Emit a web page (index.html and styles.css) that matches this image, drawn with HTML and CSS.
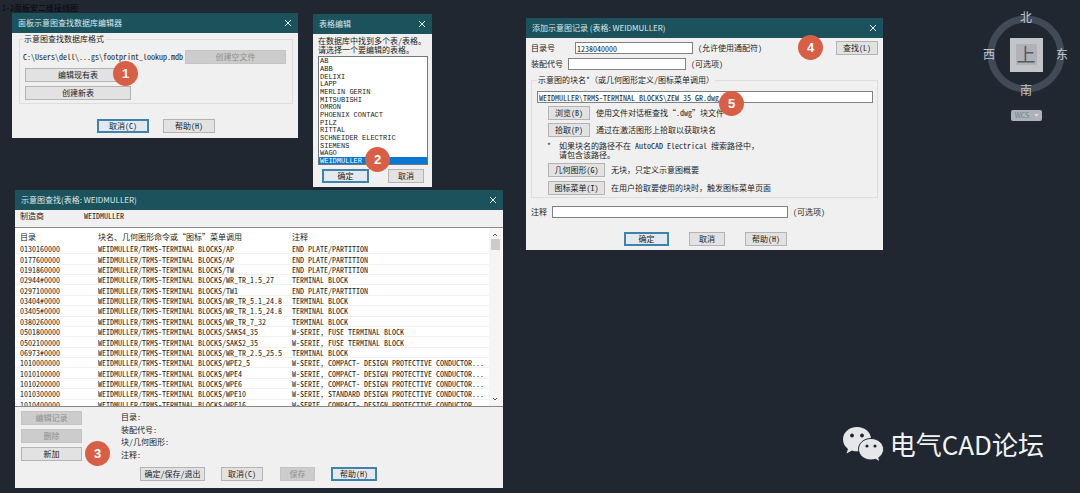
FILE: index.html
```html
<!DOCTYPE html>
<html lang="zh-CN">
<head>
<meta charset="utf-8">
<title>面板示意图查找数据库编辑器</title>
<link rel="stylesheet" href="styles.css">
</head>
<body>
<main class="desktop">
  <p class="drawing-label">1-2面板安二维接线图</p>

  <section class="window editor">
    <header class="titlebar"><h2>面板示意图查找数据库编辑器</h2><button class="close" aria-label="关闭"><svg viewBox="0 0 8 8"><path d="M1 1l6 6M7 1l-6 6"/></svg></button></header>
    <div class="content">
      <fieldset>
        <legend>示意图查找数据库格式</legend>
        <div class="file-row"><span>C:\Users\dell\...gs\footprint_lookup.mdb</span><button class="btn" disabled>创建空文件</button></div>
        <button class="btn wide">编辑现有表</button>
        <button class="btn wide">创建新表</button>
      </fieldset>
      <div class="actions"><button class="btn primary">取消(C)</button><button class="btn">帮助(H)</button></div>
    </div>
    <span class="badge">1</span>
  </section>

  <section class="window picker">
    <header class="titlebar"><h2>表格编辑</h2><button class="close" aria-label="关闭"><svg viewBox="0 0 8 8"><path d="M1 1l6 6M7 1l-6 6"/></svg></button></header>
    <div class="content">
      <label for="tables">在数据库中找到多个表/表格。<br>请选择一个要编辑的表格。</label>
      <select id="tables" size="14">
        <option>AB</option><option>ABB</option><option>DELIXI</option><option>LAPP</option><option>MERLIN GERIN</option><option>MITSUBISHI</option><option>OMRON</option><option>PHOENIX CONTACT</option><option>PILZ</option><option>RITTAL</option><option>SCHNEIDER ELECTRIC</option><option>SIEMENS</option><option>WAGO</option><option selected>WEIDMULLER</option>
      </select>
      <div class="actions"><button class="btn primary">确定</button><button class="btn">取消</button></div>
    </div>
    <span class="badge">2</span>
  </section>

  <section class="window lookup">
    <header class="titlebar"><h2>示意图查找(表格: WEIDMULLER)</h2><button class="close" aria-label="关闭"><svg viewBox="0 0 8 8"><path d="M1 1l6 6M7 1l-6 6"/></svg></button></header>
    <div class="maker"><span>制造商</span><span>WEIDMULLER</span></div>
    <div class="list">
      <div class="viewport">
        <table>
          <thead><tr><th class="c1">目录</th><th class="c2">块名、几何图形命令或“图标”菜单调用</th><th>注释</th></tr></thead>
          <tbody>
            <tr><td>0130160000</td><td>WEIDMULLER/TRMS-TERMINAL BLOCKS/AP</td><td>END PLATE/PARTITION</td></tr>
            <tr><td>0177600000</td><td>WEIDMULLER/TRMS-TERMINAL BLOCKS/AP</td><td>END PLATE/PARTITION</td></tr>
            <tr><td>0191860000</td><td>WEIDMULLER/TRMS-TERMINAL BLOCKS/TW</td><td>END PLATE/PARTITION</td></tr>
            <tr><td>02944#0000</td><td>WEIDMULLER/TRMS-TERMINAL BLOCKS/WR_TR_1.5_27</td><td>TERMINAL BLOCK</td></tr>
            <tr><td>0297100000</td><td>WEIDMULLER/TRMS-TERMINAL BLOCKS/TW1</td><td>END PLATE/PARTITION</td></tr>
            <tr><td>03404#0000</td><td>WEIDMULLER/TRMS-TERMINAL BLOCKS/WR_TR_5.1_24.8</td><td>TERMINAL BLOCK</td></tr>
            <tr><td>03405#0000</td><td>WEIDMULLER/TRMS-TERMINAL BLOCKS/WR_TR_1.5_24.8</td><td>TERMINAL BLOCK</td></tr>
            <tr><td>0380260000</td><td>WEIDMULLER/TRMS-TERMINAL BLOCKS/WR_TR_7_32</td><td>TERMINAL BLOCK</td></tr>
            <tr><td>0501800000</td><td>WEIDMULLER/TRMS-TERMINAL BLOCKS/SAKS4_35</td><td>W-SERIE, FUSE TERMINAL BLOCK</td></tr>
            <tr><td>0502100000</td><td>WEIDMULLER/TRMS-TERMINAL BLOCKS/SAKS2_35</td><td>W-SERIE, FUSE TERMINAL BLOCK</td></tr>
            <tr><td>06973#0000</td><td>WEIDMULLER/TRMS-TERMINAL BLOCKS/WR_TR_2.5_25.5</td><td>TERMINAL BLOCK</td></tr>
            <tr><td>1010000000</td><td>WEIDMULLER/TRMS-TERMINAL BLOCKS/WPE2_5</td><td>W-SERIE, COMPACT- DESIGN PROTECTIVE CONDUCTOR...</td></tr>
            <tr><td>1010100000</td><td>WEIDMULLER/TRMS-TERMINAL BLOCKS/WPE4</td><td>W-SERIE, COMPACT- DESIGN PROTECTIVE CONDUCTOR...</td></tr>
            <tr><td>1010200000</td><td>WEIDMULLER/TRMS-TERMINAL BLOCKS/WPE6</td><td>W-SERIE, COMPACT- DESIGN PROTECTIVE CONDUCTOR...</td></tr>
            <tr><td>1010300000</td><td>WEIDMULLER/TRMS-TERMINAL BLOCKS/WPE10</td><td>W-SERIE, STANDARD DESIGN PROTECTIVE CONDUCTOR...</td></tr>
            <tr><td>1010400000</td><td>WEIDMULLER/TRMS-TERMINAL BLOCKS/WPE16</td><td>W-SERIE, COMPACT- DESIGN PROTECTIVE CONDUCTOR...</td></tr>
          </tbody>
        </table>
      </div>
      <div class="scrollbar">
        <svg viewBox="0 0 8 5"><path d="M2 4l2-2 2 2"/></svg>
        <span class="thumb"></span>
        <svg viewBox="0 0 8 5"><path d="M2 1l2 2 2-2"/></svg>
      </div>
    </div>
    <div class="details">
      <div class="side"><button class="btn" disabled>编辑记录</button><button class="btn" disabled>删除</button><button class="btn">新加</button></div>
      <div class="fields"><span>目录:</span><span>装配代号:</span><span>块/几何图形:</span><span>注释:</span></div>
    </div>
    <div class="actions"><button class="btn save-exit">确定/保存/退出</button><button class="btn">取消(C)</button><button class="btn save" disabled>保存</button><button class="btn primary help">帮助(H)</button></div>
    <span class="badge">3</span>
  </section>

  <section class="window record">
    <header class="titlebar"><h2>添加示意图记录 (表格: WEIDMULLER)</h2><button class="close" aria-label="关闭"><svg viewBox="0 0 8 8"><path d="M1 1l6 6M7 1l-6 6"/></svg></button></header>
    <div class="content">
      <div class="field"><label for="catalog">目录号</label><input id="catalog" class="catalog" value="1238040000"><span>(允许使用通配符)</span><button class="btn find">查找(L)</button></div>
      <div class="field second"><label for="assembly">装配代号</label><input id="assembly"><span>(可选项)</span></div>
      <fieldset>
        <legend>示意图的块名*（或几何图形定义/图标菜单调用）</legend>
        <input class="path" aria-label="示意图的块名" value="WEIDMULLER\TRMS-TERMINAL BLOCKS\ZEW 35 GR.dwg">
        <div class="choice"><button class="btn">浏览(B)</button><span>使用文件对话框查找“.dwg”块文件</span></div>
        <div class="choice"><button class="btn">拾取(P)</button><span>通过在激活图形上拾取以获取块名</span></div>
        <div class="note"><span>*</span><p>如果块名的路径不在 AutoCAD Electrical 搜索路径中，<br>请包含该路径。</p></div>
        <div class="choice long"><button class="btn">几何图形(G)</button><span>无块，只定义示意图概要</span></div>
        <div class="choice long"><button class="btn">图标菜单(I)</button><span>在用户拾取要使用的块时，触发图标菜单页面</span></div>
      </fieldset>
      <div class="field comment"><label for="comment">注释</label><input id="comment"><span>(可选项)</span></div>
      <div class="actions"><button class="btn primary">确定</button><button class="btn">取消</button><button class="btn help">帮助(H)</button></div>
    </div>
    <span class="badge four">4</span>
    <span class="badge five">5</span>
  </section>

  <svg class="compass" viewBox="0 0 90 122" role="img" aria-label="上">
    <circle class="ring" cx="45" cy="52" r="35"/>
    <rect class="cube" x="29" y="36" width="33" height="34"/>
    <rect class="cube-face" x="35" y="42" width="21" height="21"/>
    <text class="cube-text" x="45" y="60">上</text>
    <text x="45" y="20">北</text>
    <text x="45" y="93">南</text>
    <text x="8" y="57">西</text>
    <text x="81" y="57">东</text>
    <rect class="wcs" x="30" y="108" width="31" height="11" rx="2"/>
    <text class="wcs-text" x="41" y="116">WCS</text>
    <path class="wcs-arrow" d="M53 112h5l-2.500 3z"/>
  </svg>

  <div class="brand">
    <svg viewBox="0 0 42 36">
      <path class="bubble" d="M15 1C7 1 1 6.500 1 13.500c0 4 2 7.200 5 9.500l-1.500 4.500 5.500-3c2 .7 3.500.8 5.500.8C23 25 29 20 29 13S23 1 15 1z"/>
      <path class="bubble front" d="M29 12.500c-7 0-12.500 4.700-12.500 10.700S22 34 29 34c1.600 0 3-.2 4.400-.7l4.600 2.500-1.300-4c3-2 4.900-5 4.900-8.500 0-6-5.600-10.800-12.600-10.800z"/>
      <circle class="eye" cx="10" cy="9.500" r="1.900"/><circle class="eye" cx="20" cy="9.500" r="1.900"/>
      <circle class="eye" cx="25" cy="20" r="1.600"/><circle class="eye" cx="33" cy="20" r="1.600"/>
    </svg>
    <span>电气CAD论坛</span>
  </div>
</main>
</body>
</html>
```
FILE: styles.css
```css
* { box-sizing: border-box; }

body {
  margin: 0;
  background: #202731;
  color: #1c1c1c;
  font: 8px/10px "Noto Sans Mono CJK SC", "Noto Sans CJK SC", monospace;
}

button, input, select { font: inherit; color: inherit; margin: 0; }
h2, p { margin: 0; font-size: inherit; font-weight: normal; }

.desktop { position: relative; min-height: 100vh; overflow: hidden; }

.drawing-label { padding: 3px 2px; color: #05080c; }

/* Windows */
.window { position: absolute; background: #f0f0f0; white-space: nowrap; }
.editor { left: 12px; top: 13px; width: 286px; }
.picker { left: 313px; top: 14px; width: 119px; }
.lookup { left: 15px; top: 190px; width: 488px; }
.record { left: 526px; top: 18px; width: 357px; }

.titlebar {
  display: flex;
  align-items: center;
  justify-content: space-between;
  height: 20px;
  padding: 0 6px;
  background: #1c525c;
  color: #dce8ea;
  font-family: "Noto Sans CJK SC", sans-serif;
}
.close { display: flex; padding: 0; border: 0; background: none; }
.close svg { width: 8px; height: 8px; fill: none; stroke: #e4eef0; }

.btn {
  height: 14px;
  padding: 0;
  border: 1px solid #b4b4b4;
  background: #e2e2e2;
  line-height: 10px;
  text-align: center;
}
.btn:disabled { background: #cccccc; border-color: #c4c4c4; color: #8e8e8e; }
.btn.primary { border: 2px solid #3d83ac; line-height: 8px; background: #e3e9ee; }

.actions { display: flex; }

fieldset { min-width: 0; margin: 0; padding: 0; border: 1px solid #dddddd; }
legend { padding: 0 1px; }

input { height: 12px; padding: 0 1px; border: 1px solid #808080; background: #ffffff; min-width: 0; }

.badge {
  position: absolute;
  display: grid;
  place-items: center;
  width: 25px;
  height: 25px;
  border-radius: 50%;
  background: #d85f45;
  color: #ffffff;
  font: bold 13px/13px "Liberation Sans", Arial, sans-serif;
}

/* Database editor */
.editor .content { padding: 1px 5px 5px 7px; }
.editor fieldset { display: flow-root; padding: 0 6px 3px 3px; }
.editor .file-row { display: flex; align-items: center; justify-content: space-between; margin-top: 6px; }
.editor .file-row .btn { width: 101px; }
.editor .wide { display: block; width: 106px; margin: 4px 0 0 2px; }
.editor .actions { gap: 14px; padding: 15px 0 0 78px; }
.editor .actions .btn { width: 52px; }
.editor .badge { left: 101px; top: 48px; }

/* Table picker */
.picker .content { padding: 2px 4px 4px 5px; }
.picker label { display: block; line-height: 9px; }
.picker select {
  display: block;
  width: 100%;
  height: 109px;
  margin-top: 2px;
  padding: 0;
  border: 1px solid #6f7780;
  border-radius: 0;
  background: #ffffff;
  overflow: hidden;
  outline: 0;
}
.picker option { height: 8px; min-height: 0; padding: 0 1px; font: 7px/8px "Liberation Mono", monospace; }
.picker option:nth-child(3n) { height: 7px; line-height: 7px; }
.picker option:checked { background: #0a78d0 linear-gradient(#0a78d0, #0a78d0); color: #ffffff; }
.picker .actions { justify-content: space-between; padding: 4px 4px 0; }
.picker .actions .btn { width: 36px; }
.picker .actions .primary { width: 47px; }
.picker .badge { left: 52px; top: 133px; }

/* Record lookup */
.maker { display: flex; height: 17px; padding: 1px 5px; }
.maker span:first-child { width: 64px; }
.list { display: flex; height: 180px; border: solid #8a8a8a; border-width: 1px 0; background: #ffffff; }
.viewport { flex: 1; overflow: hidden; }
.viewport table { width: 100%; height: 182px; table-layout: fixed; border-collapse: collapse; }
.viewport th, .viewport td { padding: 0 0 0 5px; text-align: left; font-weight: normal; line-height: 9px; border-bottom: 1px solid #f1f1f1; }
.viewport thead tr { height: 16px; }
.viewport th { border-bottom: 0; padding-top: 1px; }
.c1 { width: 78px; }
.c2 { width: 194px; }
.scrollbar { display: flex; flex-direction: column; width: 13px; margin-right: 1px; padding: 4px 2px; background: #f5f5f5; }
.scrollbar svg { width: 8px; height: 5px; fill: none; stroke: #505050; }
.thumb { height: 11px; margin: 2px 0 auto; background: #cbcbcb; }

.details { display: flex; gap: 39px; padding: 4px 6px 0; }
.side { display: grid; gap: 4px; width: 61px; }
.fields { display: grid; line-height: 12px; }
.lookup .actions { padding: 6px 0 7px 125px; }
.lookup .actions .btn { width: 42px; margin-right: 17px; }
.lookup .actions .save-exit { width: 65px; margin-right: 16px; }
.lookup .actions .save { width: 35px; margin-right: 16px; }
.lookup .actions .help { width: 46px; margin-right: 0; }
.lookup .badge { left: 70px; top: 251px; }

/* Add record */
.record .content { padding: 3px 5px 4px; }
.field { display: flex; align-items: center; }
.field label { margin-right: 5px; }
.field input { width: 118px; margin-right: 5px; }
.field .catalog { margin-left: 15px; }
.field .find { width: 42px; margin-left: auto; }
.field.second { margin: 3px 0 5px; }
.record fieldset { padding: 0 4px 2px 5px; }
.record .path { display: block; width: 100%; margin-top: 6px; }
.choice { display: flex; align-items: center; gap: 6px; margin: 3px 0 0 11px; }
.choice .btn { width: 42px; }
.choice.long { margin-top: 4px; }
.choice.long .btn { width: 57px; }
.note { display: flex; gap: 8px; margin: 4px 0 3px 10px; line-height: 9px; }
.field.comment { margin-top: 8px; }
.field.comment label { margin-right: 5px; }
.field.comment input { width: 236px; }
.record .actions { gap: 20px; padding: 14px 0 0 93px; }
.record .actions .btn { width: 36px; }
.record .actions .primary { width: 45px; }
.record .actions .help { width: 42px; }
.badge.four { left: 272px; top: 17px; }
.badge.five { left: 193px; top: 73px; }

/* View compass */
.compass { position: absolute; top: 2px; right: 9px; width: 90px; height: 122px; text-anchor: middle; font-family: "Noto Sans CJK SC", sans-serif; }
.compass text { fill: #c3c7cc; font-size: 12px; }
.ring { fill: none; stroke: #414a57; stroke-width: 7px; }
.cube { fill: #c2c4c8; }
.cube-face { fill: #b0b2b8; }
.compass .cube-text { fill: #555a63; font-size: 19px; }
.wcs { fill: #aeb3b9; }
.compass .wcs-text { fill: #777e87; font-size: 7px; }
.wcs-arrow { fill: #d5d8dc; }

/* Brand mark */
.brand { position: absolute; right: 36px; bottom: 29px; display: flex; align-items: center; gap: 6px; color: #f0f3f5; font: 26px/40px "Noto Sans CJK SC", sans-serif; }
.brand svg { width: 42px; height: 36px; }
.bubble { fill: #e6e7e9; }
.front { stroke: #202731; stroke-width: 1px; }
.eye { fill: #202731; }
```
